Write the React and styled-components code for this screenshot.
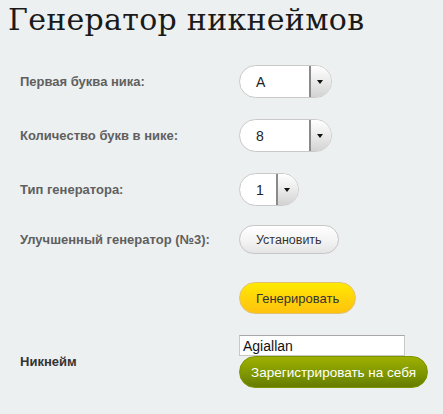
import React from 'react'
import styled, { createGlobalStyle } from 'styled-components';

const Global = createGlobalStyle`
  html, body {
    margin: 0;
    padding: 0;
    background: #edf0f0;
  }
  body {
    font-family: "Liberation Sans", Arial, sans-serif;
  }
`;

const Page = styled.div`
  width: 443px;
  height: 414px;
  overflow: hidden;
  padding: 0 0 0 8px;
  box-sizing: border-box;
  background: #edf0f0;
`;

const Title = styled.h1`
  margin: 0;
  padding-top: 2px;
  font-family: "DejaVu Serif", "Liberation Serif", serif;
  font-weight: normal;
  font-size: 30px;
  line-height: 36px;
  color: #1a1a1a;
  letter-spacing: 0.3px;
  white-space: nowrap;
`;

const Form = styled.div`
  display: flex;
  flex-direction: column;
  padding-left: 12px;
  margin-top: 27px;
`;

const Row = styled.div`
  display: grid;
  grid-template-columns: 219px auto;
  align-items: center;
  margin-top: ${p => p.$space || 0}px;
`;

const Label = styled.div`
  font-size: 13px;
  font-weight: bold;
  color: ${p => p.$dark ? '#333' : '#5f5f5f'};
`;

const Select = styled.div`
  display: flex;
  width: ${p => p.$width}px;
  height: 33px;
  box-sizing: border-box;
  border: 1px solid #c9c9c9;
  border-radius: 17px;
  overflow: hidden;
  background: #fff;
`;

const Value = styled.div`
  flex: 1;
  display: flex;
  align-items: center;
  padding-left: 16px;
  font-size: 14px;
  color: #222;
`;

const Arrow = styled.div`
  width: 18px;
  display: flex;
  align-items: center;
  justify-content: center;
  padding-right: 2px;
  border-left: 2px solid #8a8a8a;
  background: linear-gradient(#ffffff, #e6e6e6 60%, #d2d2d2);
  &::after {
    content: '';
    border-left: 3px solid transparent;
    border-right: 3px solid transparent;
    border-top: 4px solid #111;
  }
`;

const Button = styled.button`
  height: ${p => p.$h}px;
  padding: 0 ${p => p.$pad}px;
  border-radius: 16px;
  font-family: "Liberation Sans", Arial, sans-serif;
  font-size: ${p => p.$fs || 13}px;
  white-space: nowrap;
  cursor: pointer;
  justify-self: start;
`;

const GrayButton = styled(Button)`
  border: 1px solid #c6c6c6;
  background: linear-gradient(#ffffff, #f2f2f2 60%, #e4e4e4);
  color: #333;
`;

const YellowButton = styled(Button)`
  border: 1px solid #e2c272;
  background: linear-gradient(#ffea00, #ffd20a 55%, #ffc30e);
  color: #333;
`;

const GreenButton = styled(Button)`
  border: 1px solid #7e9300;
  background: linear-gradient(#9db000, #7f9700 55%, #657c00);
  color: #fff;
  width: 189px;
`;

const Stack = styled.div`
  display: flex;
  flex-direction: column;
  align-items: flex-start;
`;

const Input = styled.input`
  width: 166px;
  height: 21px;
  box-sizing: border-box;
  border: 1px solid #c8c8c8;
  border-top-color: #a8a8a8;
  padding: 0 3px;
  font-family: "Liberation Sans", Arial, sans-serif;
  font-size: 14px;
  color: #111;
  background: #fff;
  outline: none;
`;

function Dropdown({ value, width }) {
  return (
    <Select $width={width}>
      <Value>{value}</Value>
      <Arrow />
    </Select>
  );
}

export default function App() {
  return (
    <Page>
      <Global />
      <Title>Генератор никнеймов</Title>
      <Form>
        <Row>
          <Label>Первая буква ника:</Label>
          <Dropdown value="A" width={93} />
        </Row>
        <Row $space={21}>
          <Label>Количество букв в нике:</Label>
          <Dropdown value="8" width={93} />
        </Row>
        <Row $space={21}>
          <Label>Тип генератора:</Label>
          <Dropdown value="1" width={60} />
        </Row>
        <Row $space={19}>
          <Label>Улучшенный генератор (№3):</Label>
          <GrayButton $h={29} $pad={16} $fs={12.5}>Установить</GrayButton>
        </Row>
        <Row $space={28}>
          <div />
          <YellowButton $h={32} $pad={16}>Генерировать</YellowButton>
        </Row>
        <Row $space={21}>
          <Label $dark>Никнейм</Label>
          <Stack>
            <Input defaultValue="Agiallan" />
            <GreenButton $h={32} $pad={0} $fs={13.5}>Зарегистрировать на себя</GreenButton>
          </Stack>
        </Row>
      </Form>
    </Page>
  )
}
